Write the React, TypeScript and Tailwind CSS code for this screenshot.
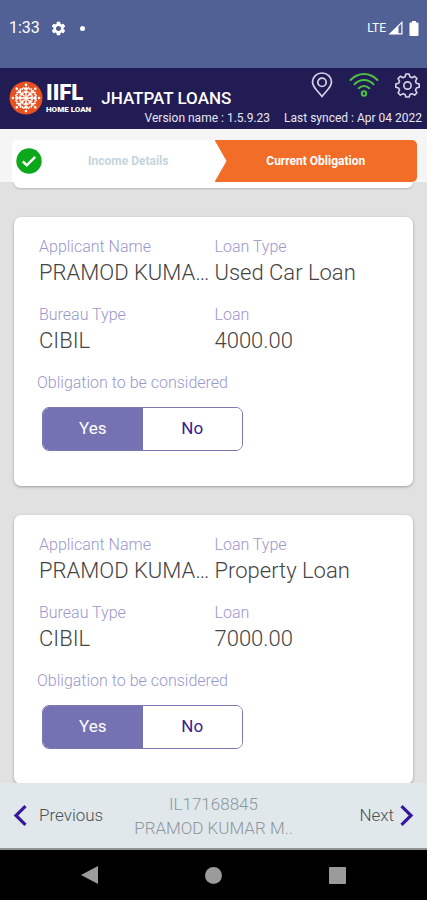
import { useState } from "react";
import { MdSettings } from "react-icons/md";

const STEPS = { done: "Income Details", current: "Current Obligation" };

const OBLIGATIONS = [
  { id: 1, applicant: "PRAMOD KUMA…", loanType: "Used Car Loan", bureau: "CIBIL", loan: "4000.00" },
  { id: 2, applicant: "PRAMOD KUMA…", loanType: "Property Loan", bureau: "CIBIL", loan: "7000.00" },
];

const SPOKES = [0, 45, 90, 135, 180, 225, 270, 315];

function StatusBar() {
  return (
    <div className="flex h-[68px] shrink-0 items-center justify-between bg-[#526195] pr-2 pb-3 pl-[9px] text-white">
      <div className="flex items-center">
        <span className="w-[41px] text-[16px] leading-5">1:33</span>
        <MdSettings size={17} />
        <span className="ml-[13px] size-[5px] rounded-full bg-white" />
      </div>
      <div className="flex items-center">
        <span className="text-[12px] leading-5">LTE</span>
        <svg className="ml-[2px]" width="15" height="14" viewBox="0 0 15 14" aria-hidden="true">
          <path d="M.5 13.500 14.500 0v13.500Z" fill="#fff" />
          <path d="M10.500 5.500 13.300 2.700v9.600h-2.800Z" fill="#526195" />
        </svg>
        <svg className="ml-[6px]" width="10" height="15" viewBox="0 0 10 15" aria-hidden="true">
          <path d="M3 0h4v1.600h1.400c.8 0 1.100.4 1.100 1.100v11c0 .8-.4 1.200-1.100 1.200H1.600c-.8 0-1.100-.4-1.100-1.200v-11c0-.7.3-1.100 1.100-1.100H3Z" fill="#fff" />
        </svg>
      </div>
    </div>
  );
}

function Logo() {
  return (
    <div className="flex items-center gap-[3px]">
      <svg width="34" height="34" viewBox="0 0 34 34" aria-hidden="true">
        <circle cx="17" cy="17" r="16.500" fill="#e9501f" />
        {SPOKES.map((angle) => (
          <g key={angle} transform={`rotate(${angle} 17 17)`} stroke="#fff" fill="none" strokeWidth="1.400">
            <path d="M17 15V6M14 6.300 17 9l3-2.700M14.800 10.300 17 12.400l2.200-2.100" />
            <circle cx="17" cy="3.900" r="1.300" fill="#fff" stroke="none" />
            <circle cx="20.700" cy="8" r="0.900" fill="#fff" stroke="none" />
          </g>
        ))}
        <circle cx="17" cy="17" r="2" fill="#fff" />
      </svg>
      <div className="flex flex-col text-white">
        <span className="text-[22px] leading-6 font-black">IIFL</span>
        <span className="text-[8px] leading-[10px] font-black whitespace-nowrap">HOME LOAN</span>
      </div>
    </div>
  );
}

function PinIcon() {
  return (
    <svg width="22" height="26" viewBox="0 0 22 26" fill="none" stroke="#d5d3e6" strokeWidth="1.700" aria-hidden="true">
      <path d="M11 24.500C7.500 19.500 1.500 15.500 1.500 10a9.500 9 0 0 1 19 0c0 5.500-6 9.500-9.500 14.500Z" strokeLinejoin="round" />
      <circle cx="11" cy="10.300" r="4.200" />
    </svg>
  );
}

function WifiIcon() {
  return (
    <svg width="30" height="26" viewBox="0 0 30 26" fill="none" stroke="#4fbd45" strokeWidth="2" strokeLinecap="round" aria-hidden="true">
      <path d="M1.500 8C9.500 0 20.500 0 28.500 8M5.500 12.300c5.500-5.600 13.500-5.600 19 0M9.700 16.200c3-3 7.600-3 10.600 0" />
      <circle cx="15" cy="21.500" r="2.200" />
    </svg>
  );
}

function GearIcon() {
  return (
    <svg width="25" height="26" viewBox="0 0 26 26" fill="none" stroke="#d5d3e6" strokeWidth="1.700" strokeLinejoin="round" aria-hidden="true">
      <path d="M11.300 1.500h3.400l.8 3 2.200.9 2.700-1.500 2.400 2.400-1.500 2.700.9 2.200 3 .8v3.400l-3 .8-.9 2.200 1.500 2.700-2.400 2.400-2.700-1.500-2.200.9-.8 2.600h-3.400l-.8-2.600-2.200-.9-2.700 1.500-2.400-2.400 1.500-2.700-.9-2.200-3-.8v-3.400l3-.8.9-2.200-1.500-2.700 2.400-2.400 2.700 1.500 2.200-.9Z" />
      <circle cx="13" cy="13.500" r="3.800" />
    </svg>
  );
}

function AppHeader() {
  return (
    <header className="shrink-0 bg-[#221c54] pr-[5px] pb-[3px] pl-[9px] text-[#e8e6f2]">
      <div className="flex h-[42px] items-start justify-between">
        <div className="flex items-center gap-[10px] pt-[13px]">
          <Logo />
          <h1 className="text-[17px] leading-5 font-medium whitespace-nowrap text-white">JHATPAT LOANS</h1>
        </div>
        <div className="flex items-center gap-4 pt-1 pr-[2px]">
          <button type="button" aria-label="Location">
            <PinIcon />
          </button>
          <button type="button" aria-label="Sync">
            <WifiIcon />
          </button>
          <button type="button" aria-label="Settings">
            <GearIcon />
          </button>
        </div>
      </div>
      <div className="flex justify-end gap-[14px] text-[12px] leading-4 whitespace-nowrap">
        <span>Version name : 1.5.9.23</span>
        <span>Last synced : Apr 04 2022</span>
      </div>
    </header>
  );
}

function Stepper() {
  return (
    <div className="shrink-0 bg-[#f5f5f6] pt-[11px] pr-[10px] pl-3">
      <ol className="grid h-[42px] grid-cols-2 overflow-hidden rounded-t-[5px] rounded-br-[5px] bg-white text-[12px] font-bold">
        <li className="flex items-center pl-1 text-[#c5d5dc]">
          <svg width="26" height="26" viewBox="0 0 26 26" aria-hidden="true">
            <circle cx="13" cy="13" r="12.700" fill="#0aa81a" />
            <path d="m6.800 13.300 4 4 8.400-8.500" fill="none" stroke="#fff" strokeWidth="2.500" />
          </svg>
          <span className="flex-1 text-center">{STEPS.done}</span>
        </li>
        <li className="flex items-center justify-center bg-[#f26d27] text-white [clip-path:polygon(0_0,100%_0,100%_100%,0_100%,12px_50%)]">
          {STEPS.current}
        </li>
      </ol>
    </div>
  );
}

function Field({ label, value }: { label: string; value: string }) {
  return (
    <div className="min-w-0">
      <dt className="text-[16px] leading-6 text-[#9b97cb]">{label}</dt>
      <dd className="text-[22px] leading-7 whitespace-nowrap text-[#444]">{value}</dd>
    </div>
  );
}

function ObligationCard({ item }: { item: (typeof OBLIGATIONS)[number] }) {
  const [considered, setConsidered] = useState(true);

  return (
    <article className="rounded-[7px] bg-white px-[23px] pt-[18px] pb-[35px] font-light shadow-[0_1px_3px_rgba(0,0,0,0.3)]">
      <dl className="grid grid-cols-2 gap-y-4 pl-[2px]">
        <Field label="Applicant Name" value={item.applicant} />
        <Field label="Loan Type" value={item.loanType} />
        <Field label="Bureau Type" value={item.bureau} />
        <Field label="Loan" value={item.loan} />
      </dl>
      <p className="mt-4 text-[16px] leading-6 text-[#9b97cb]">Obligation to be considered</p>
      <div
        role="group"
        aria-label="Obligation to be considered"
        className="mt-3 ml-[5px] flex h-11 w-[201px] overflow-hidden rounded-[7px] border border-[#7c78b4] text-[17px] font-normal"
      >
        <button
          type="button"
          aria-pressed={considered}
          onClick={() => setConsidered(true)}
          className={considered ? "flex-1 bg-[#7572b3] text-white" : "flex-1 bg-white text-[#36218f]"}
        >
          Yes
        </button>
        <button
          type="button"
          aria-pressed={!considered}
          onClick={() => setConsidered(false)}
          className={considered ? "flex-1 bg-white text-[#36218f]" : "flex-1 bg-[#7572b3] text-white"}
        >
          No
        </button>
      </div>
    </article>
  );
}

function Footer() {
  return (
    <footer className="grid h-[65px] shrink-0 grid-cols-[1fr_auto_1fr] items-center bg-[#e1e8ec] px-[13px] text-[17px] font-light text-[#4c5055]">
      <button type="button" className="flex items-center gap-3 justify-self-start">
        <svg width="14" height="21" viewBox="0 0 13 21" fill="none" stroke="#36189a" strokeWidth="3.200" aria-hidden="true">
          <path d="M12 1.200 2.500 10.500l9.500 9.300" />
        </svg>
        Previous
      </button>
      <div className="text-center leading-6 text-[#8d979d]">
        <p>IL17168845</p>
        <p>PRAMOD KUMAR M..</p>
      </div>
      <button type="button" className="flex items-center gap-[6px] justify-self-end">
        Next
        <svg width="14" height="21" viewBox="0 0 13 21" fill="none" stroke="#36189a" strokeWidth="3.200" aria-hidden="true">
          <path d="m1 1.200 9.500 9.300L1 19.800" />
        </svg>
      </button>
    </footer>
  );
}

function SystemNav() {
  return (
    <nav className="flex h-[52px] shrink-0 items-center justify-around border-t-2 border-[#8e9396] bg-black px-7 text-[#9b9b9b]">
      <button type="button" aria-label="Back">
        <svg width="18" height="18" viewBox="0 0 18 18" fill="currentColor" aria-hidden="true">
          <path d="M0 9 17 0v18Z" />
        </svg>
      </button>
      <button type="button" aria-label="Home" className="size-[17px] rounded-full bg-current" />
      <button type="button" aria-label="Recents" className="size-[17px] rounded-[1px] bg-current" />
    </nav>
  );
}

export default function App() {
  return (
    <div className="flex h-screen flex-col overflow-hidden bg-[#e1e1e1] font-['Roboto',sans-serif]">
      <StatusBar />
      <AppHeader />
      <Stepper />
      <main className="min-h-0 flex-1 overflow-hidden px-[14px]">
        <div className="h-[6px] rounded-b-[7px] bg-white shadow-[0_1px_2px_rgba(0,0,0,0.2)]" />
        <div className="mt-[29px] flex flex-col gap-[29px]">
          {OBLIGATIONS.map((item) => (
            <ObligationCard key={item.id} item={item} />
          ))}
        </div>
      </main>
      <Footer />
      <SystemNav />
    </div>
  );
}
